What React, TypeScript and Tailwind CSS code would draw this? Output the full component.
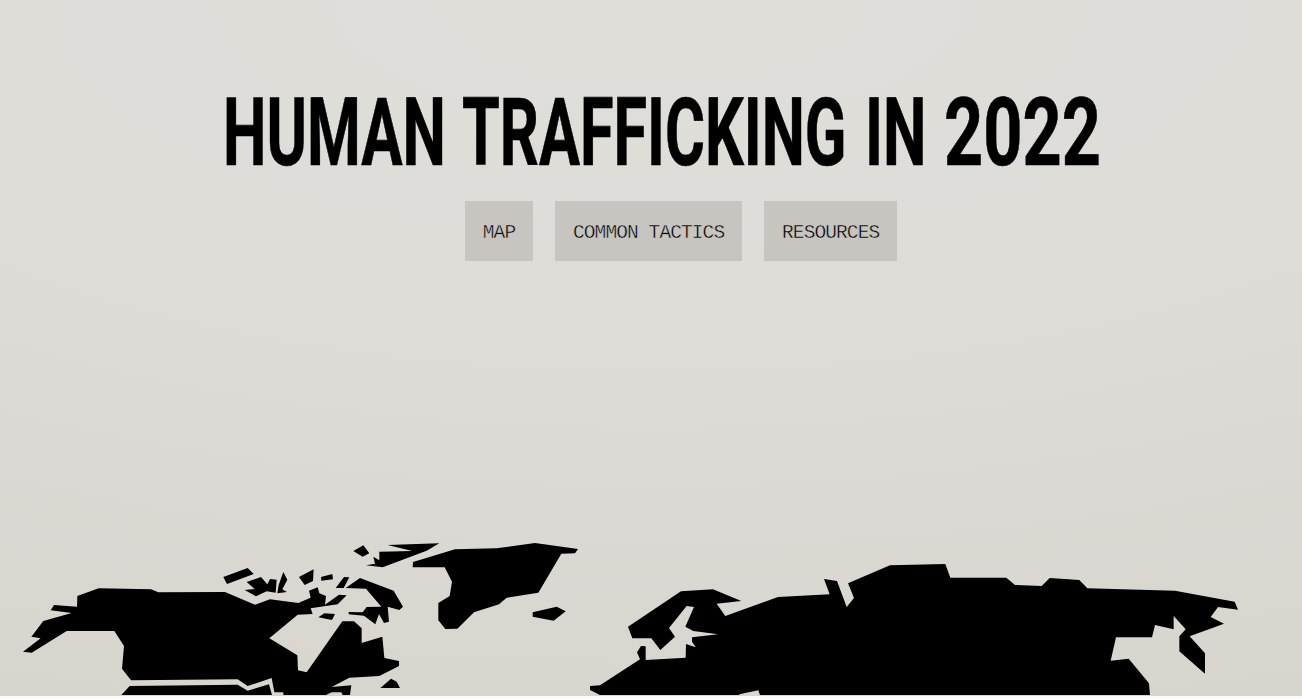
import React from "react";

const titleWords = [
  { text: "HUMAN", box: "w-[239.5px]", scale: "scale-x-[0.654]" },
  { text: "TRAFFICKING", box: "w-[402.5px]", scale: "scale-x-[0.65]" },
  { text: "IN", box: "w-[79px]", scale: "scale-x-[0.655]" },
  { text: "2022", box: "w-[160px]", scale: "scale-x-[0.728]" },
];

const links = ["MAP", "COMMON TACTICS", "RESOURCES"];

function WorldMap() {
  return (
    <svg className="block h-[165px] w-[1302px] shrink-0" viewBox="0 0 3906 495" fill="#000">
      {/* North America */}
      <polygon points="69,365 95,368 200,303 343,303 372,348 366,416 393,451 713,448 743,468 815,444 823,487 850,487 850,495 978,495 995,487 1024,487 1028,495 1050,495 1054,466 995,471 1048,443 1138,438 1197,408 1197,393 1153,384 1147,320 1085,339 1085,295 1062,274 1027,274 920,427 894,421 892,376 808,325 893,254 938,252 932,235 1013,223 1040,196 1017,194 975,224 978,198 958,190 953,172 927,182 932,203 895,219 810,208 765,224 675,186 475,187 453,178 296,175 232,198 231,230 162,225 152,241 215,249 130,273 94,320 122,325" />
      <polygon points="364,495 389,468 713,464 743,482 807,463 816,495" />
      {/* Arctic islands */}
      <g transform="translate(630 0)">
        <polygon points="40,141 113,114 131,132 51,162" />
        <polygon points="110,156 153,141 172,163 180,147 200,149 197,188 170,184 138,199 104,180 134,177" />
        <polygon points="220,126 232,149 217,178 231,186 202,190 206,165" />
        <polygon points="267,141 311,118 309,153 284,165" />
        <polygon points="333,141 367,132 369,148 334,152" />
        <polygon points="402,141 418,142 401,174 377,174" />
        <polygon points="407,174 450,144 551,182 579,230 568,240 533,230 537,275 522,279 507,252 496,283 462,257 416,253 416,246 458,247 470,231 514,230 468,176" />
        <polygon points="325,262 343,250 375,252 366,270" />
        <polygon points="430,63 460,46 478,70 458,80" />
        <polygon points="533,45 688,40 650,62 518,112 468,106 495,101 490,80 508,91 508,65 607,63" />
        <polygon points="511,474 543,446 560,455 570,474" />
      </g>
      {/* Greenland and Iceland */}
      <g transform="translate(1200 0)">
        <polygon points="39,96 165,58 290,55 405,39 534,57 525,70 484,71 415,188 320,203 297,223 222,247 172,296 136,297 115,271 115,219 149,198 156,155 134,112 38,112" />
        <polygon points="398,247 470,230 497,244 461,272 398,260" />
      </g>
      {/* Eurasia */}
      <polygon
        transform="translate(1740 60)"
        points="30,408 60,406 180,328 171,307 183,288 197,289 197,330 317,323 318,282 347,292 336,275 336,262 414,253 340,243 316,230 342,171 320,168 267,234 285,260 241,300 214,265 157,265 144,230 303,124 399,118 484,153 410,161 436,198 594,141 749,133 732,87 771,93 800,171 822,144 804,100 930,46 1096,42 1111,83 1279,83 1305,105 1385,108 1409,84 1498,90 1522,115 1785,122 1964,155 1974,179 1914,171 1892,201 1932,221 1829,259 1875,310 1875,371 1798,304 1798,259 1817,238 1781,198 1781,238 1725,225 1716,262 1608,262 1592,332 1646,326 1707,400 1710,435 540,435 535,421 478,433 478,435 60,435 30,420"
      />
    </svg>
  );
}

export default function App() {
  return (
    <div className="h-[699px] overflow-hidden bg-[#fafafa]">
      <main className="flex h-[695.5px] flex-col bg-[radial-gradient(ellipse_140%_105%_at_50%_0%,#e1deda_0%,#dddcd7_45%,#d8d5ce_100%)]">
        <h1 className="flex h-[201px] pl-[222.5px] pt-[86px] font-['Roboto'] text-[94px] font-bold leading-[94px] text-black [-webkit-text-stroke:0.6px_#000]">
          {titleWords.map((word) => (
            <span key={word.text} className={`${word.box} shrink-0`}>
              <span className={`inline-block origin-left whitespace-nowrap ${word.scale}`}>{word.text} </span>
            </span>
          ))}
        </h1>
        <nav className="flex h-[60px] gap-[21.8px] pl-[464.8px]">
          {links.map((label) => (
            <a
              key={label}
              href="#"
              className="flex items-center whitespace-nowrap bg-[#c7c5c0] px-[18px] pt-[5px] font-['Liberation_Mono',monospace] text-[19.5px] tracking-[-0.9px] text-black [-webkit-text-stroke:0.45px_#c7c5c0]"
            >
              {label}
            </a>
          ))}
        </nav>
        <div className="flex flex-1 items-end pb-[0.5px]">
          <WorldMap />
        </div>
      </main>
    </div>
  );
}
